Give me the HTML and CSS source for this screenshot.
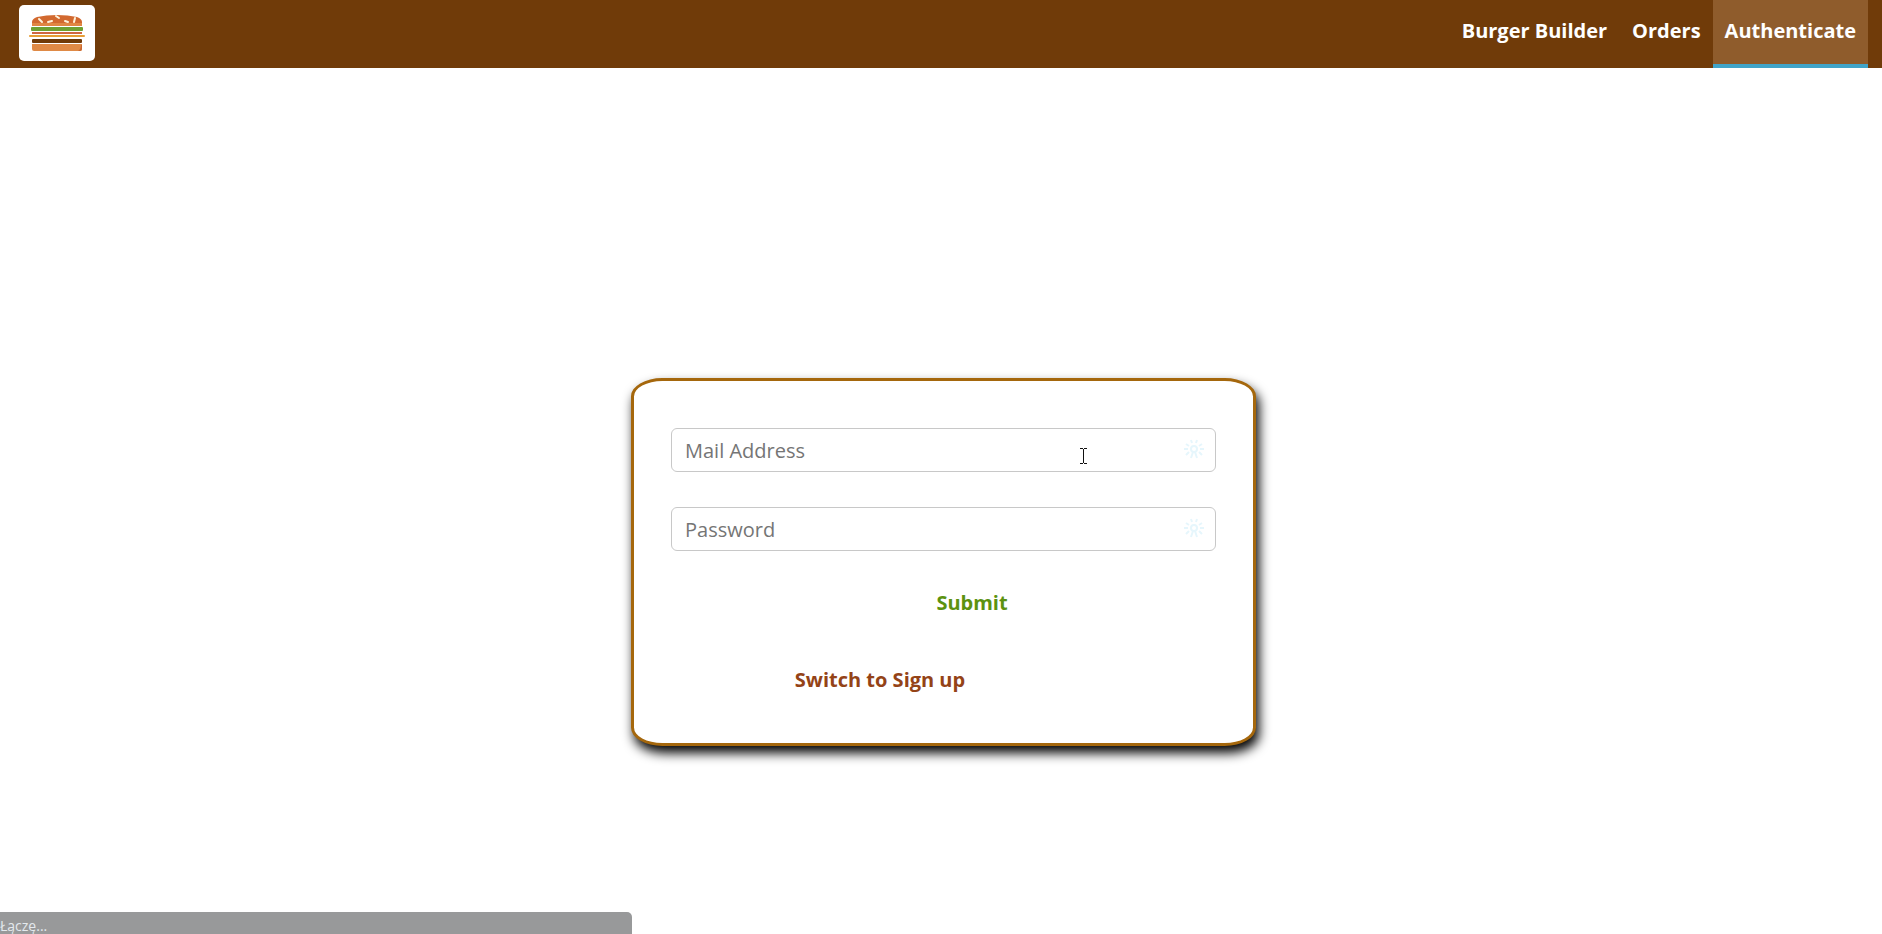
FILE: index.html
```html
<!DOCTYPE html>
<html lang="en">
<head>
<meta charset="utf-8">
<title>Burger Builder</title>
<link rel="stylesheet" href="styles.css">
</head>
<body>
<header class="toolbar">
  <a class="logo" href="#" aria-label="Home">
    <svg width="56" height="38" viewBox="0 0 56 38">
      <path d="M3 12V8Q3 5 8 3Q17 1 28 1T48 3Q53 5 53 8V12Z" fill="#d2692f"/>
      <path d="M3 9H53V12H3Z" fill="#e08642"/>
      <path d="M10 5L13 8M19 8L23 7M27 2L30 4M36 7L39 8M46 4L45 8" stroke="#fff4dc" stroke-width="2" stroke-linecap="round"/>
      <rect x="2" y="13" width="52" height="4" rx="1" fill="#6da132"/>
      <rect x="3" y="18" width="50" height="2" fill="#cf6740"/>
      <rect x="0" y="21" width="56" height="2" rx="1" fill="#e69d35"/>
      <rect x="3" y="25" width="50" height="4" rx="1" fill="#703b09"/>
      <path d="M3 30H53V35Q53 37 51 37H5Q3 37 3 35Z" fill="#df8a46"/>
      <path d="M53 31V35Q53 37 51 37H49Q52 35 52 31Z" fill="#c96831"/>
    </svg>
  </a>
  <nav class="nav">
    <a class="nav-link" href="#">Burger Builder</a>
    <a class="nav-link" href="#">Orders</a>
    <a class="nav-link active" href="#">Authenticate</a>
  </nav>
</header>
<main class="page">
  <form class="card">
    <div class="field">
      <input class="text-input" type="email" placeholder="Mail Address" aria-label="Mail Address">
      <svg class="key-icon" width="22" height="20" viewBox="0 0 22 20"><use href="#spark"/></svg>
      <svg class="pointer" width="7" height="16" viewBox="0 0 7 16"><path d="M0 .5H3M4 .5H7M3.500 1V15M0 15.500H3M4 15.500H7" stroke="#111"/></svg>
    </div>
    <div class="field">
      <input class="text-input" type="password" placeholder="Password" aria-label="Password">
      <svg class="key-icon" width="22" height="20" viewBox="0 0 22 20">
        <g id="spark" fill="none" stroke="#e6f6fc" stroke-width="2">
          <circle cx="11" cy="10" r="3"/>
          <path d="M10 13L8 19M12 13L14 19M1 10H5M17 10H21M3 5L6 7M19 5L16 7M8 1L9 4M14 1L13 4M3 16L6 13M19 16L16 13"/>
        </g>
      </svg>
    </div>
    <button class="btn submit" type="submit">Submit</button>
    <button class="btn switch" type="button">Switch to Sign up</button>
  </form>
</main>
<div class="status" role="status">Łączę...</div>
</body>
</html>
```
FILE: styles.css
```css
* { box-sizing: border-box; }
body {
  margin: 0;
  min-height: 100vh;
  background: #fff;
  font-family: "Open Sans", sans-serif;
  font-size: 20px;
}
.toolbar {
  display: flex;
  justify-content: space-between;
  align-items: stretch;
  height: 68px;
  padding: 0 14px 0 19px;
  background: #703b09;
}
.logo {
  display: flex;
  align-items: center;
  justify-content: center;
  width: 76px;
  height: 56px;
  margin-top: 5px;
  border-radius: 5px;
  background: #fff;
}
.nav { display: flex; }
.nav-link {
  display: flex;
  align-items: center;
  padding: 0 12px 4px 13px;
  border-bottom: 4px solid transparent;
  color: #fff;
  font-weight: 700;
  text-decoration: none;
}
.nav-link.active {
  padding-left: 12px;
  background: #8f5c2c;
  border-bottom-color: #40a4c8;
}
.page {
  display: flex;
  justify-content: center;
  padding: 310px 0 80px 5px;
}
.card {
  display: flex;
  flex-direction: column;
  width: 33.3%;
  min-width: 320px;
  padding: 47px 37px 39px;
  border: 3px solid #a5670c;
  border-radius: 5%;
  background: #fff;
  box-shadow: 3px 7px 12px #000;
}
.field {
  position: relative;
  margin-bottom: 35px;
}
.text-input {
  display: block;
  width: 100%;
  height: 44px;
  padding: 0 13px;
  border: 1px solid #c8c8c8;
  border-radius: 6px;
  background: #fff;
  font: inherit;
}
.text-input::placeholder { color: #757575; }
.key-icon {
  position: absolute;
  top: 11px;
  right: 11px;
}
.pointer {
  position: absolute;
  top: 20px;
  right: 129px;
}
.btn {
  padding: 10px;
  border: 0;
  background: transparent;
  font: inherit;
  font-weight: 700;
  line-height: 28px;
  cursor: pointer;
}
.submit {
  align-self: center;
  margin: -7px 0 29px 57px;
  color: #5c9210;
}
.switch {
  align-self: center;
  margin-right: 127px;
  color: #944317;
}
.status {
  position: fixed;
  left: 0;
  bottom: 0;
  width: 632px;
  max-width: 100%;
  height: 22px;
  overflow: hidden;
  border-top-right-radius: 5px;
  background: #98999a;
  color: #e4e9ee;
  font-size: 14px;
  line-height: 28px;
}
```
